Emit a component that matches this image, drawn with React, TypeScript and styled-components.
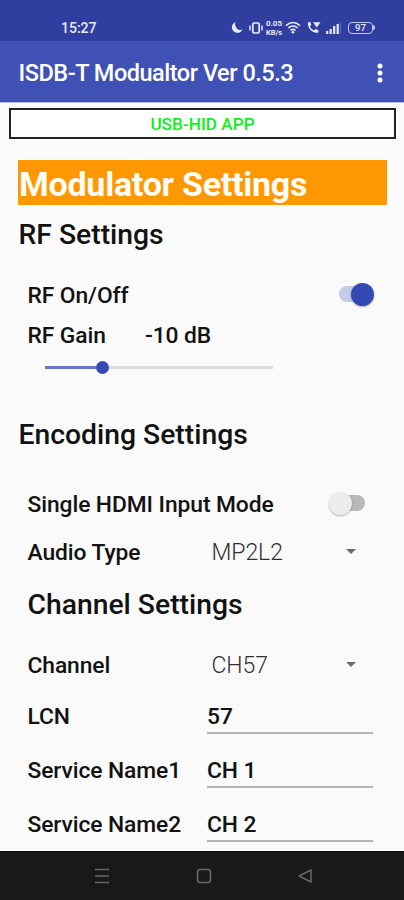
import React from "react";
import styled, { createGlobalStyle } from "styled-components";

const GlobalStyle = createGlobalStyle`
  * { box-sizing: border-box; }
  body { margin: 0; background: #fafafa; }
`;

const Screen = styled.div`
  display: flex;
  flex-direction: column;
  width: 404px;
  height: 900px;
  overflow: hidden;
  background: #fafafa;
  color: #121212;
  font-family: Roboto, "Liberation Sans", sans-serif;
  white-space: nowrap;
`;

const StatusBar = styled.div`
  display: flex;
  flex: none;
  align-items: center;
  justify-content: space-between;
  height: 41px;
  padding: 14px 29px 0 61px;
  background: #303f9f;
  color: #e8eafa;
`;

const Clock = styled.span`
  font-size: 14px;
  font-weight: 500;
`;

const StatusIcons = styled.div`
  display: flex;
  align-items: center;
  height: 16px;
`;

const Glyph = styled.svg<{ $gap?: number }>`
  display: block;
  flex: none;
  margin-left: ${(p) => p.$gap ?? 0}px;
`;

const NetSpeed = styled.span`
  display: flex;
  flex-direction: column;
  align-items: center;
  width: 20px;
  margin-left: 1px;
  font-size: 8px;
  font-weight: 700;
  line-height: 9px;
`;

const Unit = styled.span`
  font-size: 7.5px;
`;

const Battery = styled.span`
  display: flex;
  align-items: center;
  justify-content: center;
  width: 25px;
  height: 12px;
  margin-left: 7px;
  border: 1.5px solid #bfc5ea;
  border-radius: 4px;
  font-size: 9.5px;
  font-weight: 500;
  line-height: 9px;
`;

const BatteryTip = styled.span`
  width: 2px;
  height: 5px;
  border-radius: 0 2px 2px 0;
  background: #bfc5ea;
`;

const AppBar = styled.header`
  display: flex;
  flex: none;
  align-items: center;
  justify-content: space-between;
  height: 62px;
  padding: 2px 20px 0 18.5px;
  border-bottom: 1px solid #b9bfe2;
  background: #3f51b5;
  color: #fff;
`;

const Title = styled.h1`
  margin: 0;
  font-size: 23.5px;
  font-weight: 500;
  letter-spacing: -0.48px;
`;

const DeviceState = styled.div`
  display: flex;
  flex: none;
  align-items: center;
  justify-content: center;
  height: 31px;
  margin: 5px 8px 0 9px;
  padding-top: 1px;
  border: 2px solid #25211f;
  background: #fff;
  color: #10ee1c;
  font-size: 17.2px;
  font-weight: 500;
`;

const Banner = styled.h2`
  flex: none;
  height: 45px;
  margin: 21px 17px 0 18px;
  padding-left: 1px;
  background: #ff9800;
  color: #fffdf8;
  font-size: 34px;
  font-weight: 700;
  letter-spacing: -0.25px;
  line-height: 49px;
`;

const Heading = styled.h3<{ $height: number; $indent: number }>`
  display: flex;
  flex: none;
  align-items: center;
  height: ${(p) => p.$height}px;
  margin: 0;
  padding: 0 0 2px ${(p) => p.$indent}px;
  font-size: 28.3px;
  font-weight: 500;
`;

const Row = styled.div<{ $height: number; $end?: number; $before?: number }>`
  display: flex;
  flex: none;
  align-items: center;
  height: ${(p) => p.$height}px;
  margin-top: ${(p) => p.$before ?? 0}px;
  padding: 0 ${(p) => p.$end ?? 31}px 0 27.5px;
  font-size: 22.8px;
  font-weight: 500;
  letter-spacing: -0.08px;
`;

const Label = styled.span<{ $width?: number }>`
  flex: ${(p) => (p.$width ? `0 0 ${p.$width}px` : "1")};
`;

const SwitchTrack = styled.span<{ $on?: boolean }>`
  display: flex;
  align-items: center;
  justify-content: ${(p) => (p.$on ? "flex-end" : "flex-start")};
  width: 34px;
  height: 16px;
  margin-top: -2px;
  border-radius: 8px;
  background: ${(p) => (p.$on ? "#c5cae9" : "#b8b8b8")};
`;

const SwitchThumb = styled.span<{ $on?: boolean }>`
  flex: none;
  width: 23px;
  height: 23px;
  margin: ${(p) => (p.$on ? "0 -1px 0 0" : "0 0 0 -2px")};
  border-radius: 50%;
  background: ${(p) => (p.$on ? "#3549b4" : "#ececec")};
  box-shadow: 0 1px 2px rgba(0, 0, 0, 0.3);
`;

const Slider = styled.div`
  display: flex;
  flex: none;
  align-items: center;
  height: 45px;
  padding-left: 45px;
`;

const SliderFill = styled.span`
  width: 51px;
  height: 3px;
  background: #6874c3;
`;

const SliderThumb = styled.span`
  width: 13px;
  height: 13px;
  border-radius: 50%;
  background: #3549b4;
`;

const SliderRest = styled.span`
  width: 164px;
  height: 3px;
  background: #dedede;
`;

const Choice = styled.span`
  display: flex;
  flex: 1;
  align-items: center;
  justify-content: space-between;
  color: #303030;
  font-size: 23px;
  font-weight: 300;
`;

const Caret = styled.span`
  width: 0;
  height: 0;
  margin-top: -2px;
  border: 5px solid transparent;
  border-top-color: #6a6a6a;
  border-bottom: 0;
`;

const Field = styled.span`
  display: flex;
  flex: 1;
  align-items: center;
  align-self: stretch;
  margin: 9px 0;
  border-bottom: 2px solid #b3b3b3;
  padding-top: 2px;
`;

const NavBar = styled.nav`
  display: flex;
  flex: none;
  align-items: center;
  justify-content: space-between;
  height: 49px;
  padding: 0 91px 0 94px;
  border-top: 1px solid #0c0c0c;
  background: #191919;
`;

const fields = [
  { label: "LCN", value: "57" },
  { label: "Service Name1", value: "CH 1" },
  { label: "Service Name2", value: "CH 2" },
];

function Switch({ on }: { on?: boolean }) {
  return (
    <SwitchTrack $on={on}>
      <SwitchThumb $on={on} />
    </SwitchTrack>
  );
}

function StatusGlyphs() {
  return (
    <StatusIcons>
      <Glyph width="12" height="13" viewBox="0 0 12 13">
        <path d="M4.500 1.200A5.500 5.500 0 1 0 11.400 8.600Q8 9.800 5.800 7.400Q3.300 4.600 4.500 1.200Z" fill="currentColor" />
      </Glyph>
      <Glyph $gap={6} width="14" height="12" viewBox="0 0 14 12">
        <rect x="3.800" y="1" width="6.400" height="10" rx="1.200" fill="none" stroke="currentColor" strokeWidth="1.700" />
        <path d="M1 3.500v5M13 3.500v5" stroke="currentColor" strokeWidth="1.400" />
      </Glyph>
      <NetSpeed>
        <span>0.05</span>
        <Unit>KB/s</Unit>
      </NetSpeed>
      <Glyph $gap={1} width="16" height="13" viewBox="0 0 16 13">
        <path d="M1 4.600Q8-1.600 15 4.600M3.300 7Q8 3 12.700 7M5.500 9.300Q8 7.400 10.500 9.300" fill="none" stroke="currentColor" strokeWidth="1.600" />
        <circle cx="8" cy="11.200" r="1.300" fill="currentColor" />
      </Glyph>
      <Glyph $gap={6} width="14" height="13" viewBox="0 0 14 13">
        <path d="M1 1.200 3.300 1l1 3-1.400 1.200c.8 2 2.200 3.500 4.200 4.300l1.300-1.400 3 1-.2 2.300C5.800 12.800.2 7.500 1 1.200Z" fill="currentColor" />
        <path d="M6 1.200h7.500L9.800 6.400Z" fill="currentColor" />
      </Glyph>
      <Glyph $gap={5} width="15" height="12" viewBox="0 0 15 12">
        <path d="M1.200 12V9M4.700 12V7M8.200 12V4M11.700 12V2" stroke="currentColor" strokeWidth="2.200" />
        <path d="M14.300 12V1" stroke="#6672bd" strokeWidth="1" />
      </Glyph>
      <Battery>97</Battery>
      <BatteryTip />
    </StatusIcons>
  );
}

export default function App() {
  return (
    <>
      <GlobalStyle />
      <Screen>
        <StatusBar>
          <Clock>15:27</Clock>
          <StatusGlyphs />
        </StatusBar>
        <AppBar>
          <Title>ISDB-T Modualtor Ver 0.5.3</Title>
          <Glyph width="8" height="20" viewBox="0 0 8 20">
            <g fill="currentColor">
              <circle cx="4" cy="3" r="2.500" />
              <circle cx="4" cy="10" r="2.500" />
              <circle cx="4" cy="17" r="2.500" />
            </g>
          </Glyph>
        </AppBar>
        <DeviceState>USB-HID APP</DeviceState>
        <Banner>Modulator Settings</Banner>

        <Heading $height={60} $indent={18.5}>RF Settings</Heading>
        <Row $height={60}>
          <Label>RF On/Off</Label>
          <Switch on />
        </Row>
        <Row $height={20}>
          <Label $width={117.5}>RF Gain</Label>
          <span>-10 dB</span>
        </Row>
        <Slider>
          <SliderFill />
          <SliderThumb />
          <SliderRest />
        </Slider>

        <Heading $height={90} $indent={18.5}>Encoding Settings</Heading>
        <Row $height={48} $end={39}>
          <Label>Single HDMI Input Mode</Label>
          <Switch />
        </Row>
        <Row $height={48} $end={48}>
          <Label $width={184}>Audio Type</Label>
          <Choice>MP2L2<Caret /></Choice>
        </Row>

        <Heading $height={58} $indent={27.5}>Channel Settings</Heading>
        <Row $height={48} $end={48} $before={7}>
          <Label $width={184}>Channel</Label>
          <Choice>CH57<Caret /></Choice>
        </Row>
        {fields.map((f) => (
          <Row key={f.label} $height={54}>
            <Label $width={179.5}>{f.label}</Label>
            <Field>{f.value}</Field>
          </Row>
        ))}

        <NavBar>
          <Glyph width="16" height="16" viewBox="0 0 16 16">
            <path d="M1 1.500h14M1 8h14M1 14.500h14" stroke="#686868" strokeWidth="1.500" />
          </Glyph>
          <Glyph width="16" height="16" viewBox="0 0 16 16">
            <rect x="1.500" y="1.500" width="13" height="13" rx="3" fill="none" stroke="#686868" strokeWidth="1.500" />
          </Glyph>
          <Glyph width="16" height="16" viewBox="0 0 16 16">
            <path d="M14 2v12L2 8Z" fill="none" stroke="#686868" strokeWidth="1.500" strokeLinejoin="round" />
          </Glyph>
        </NavBar>
      </Screen>
    </>
  );
}
